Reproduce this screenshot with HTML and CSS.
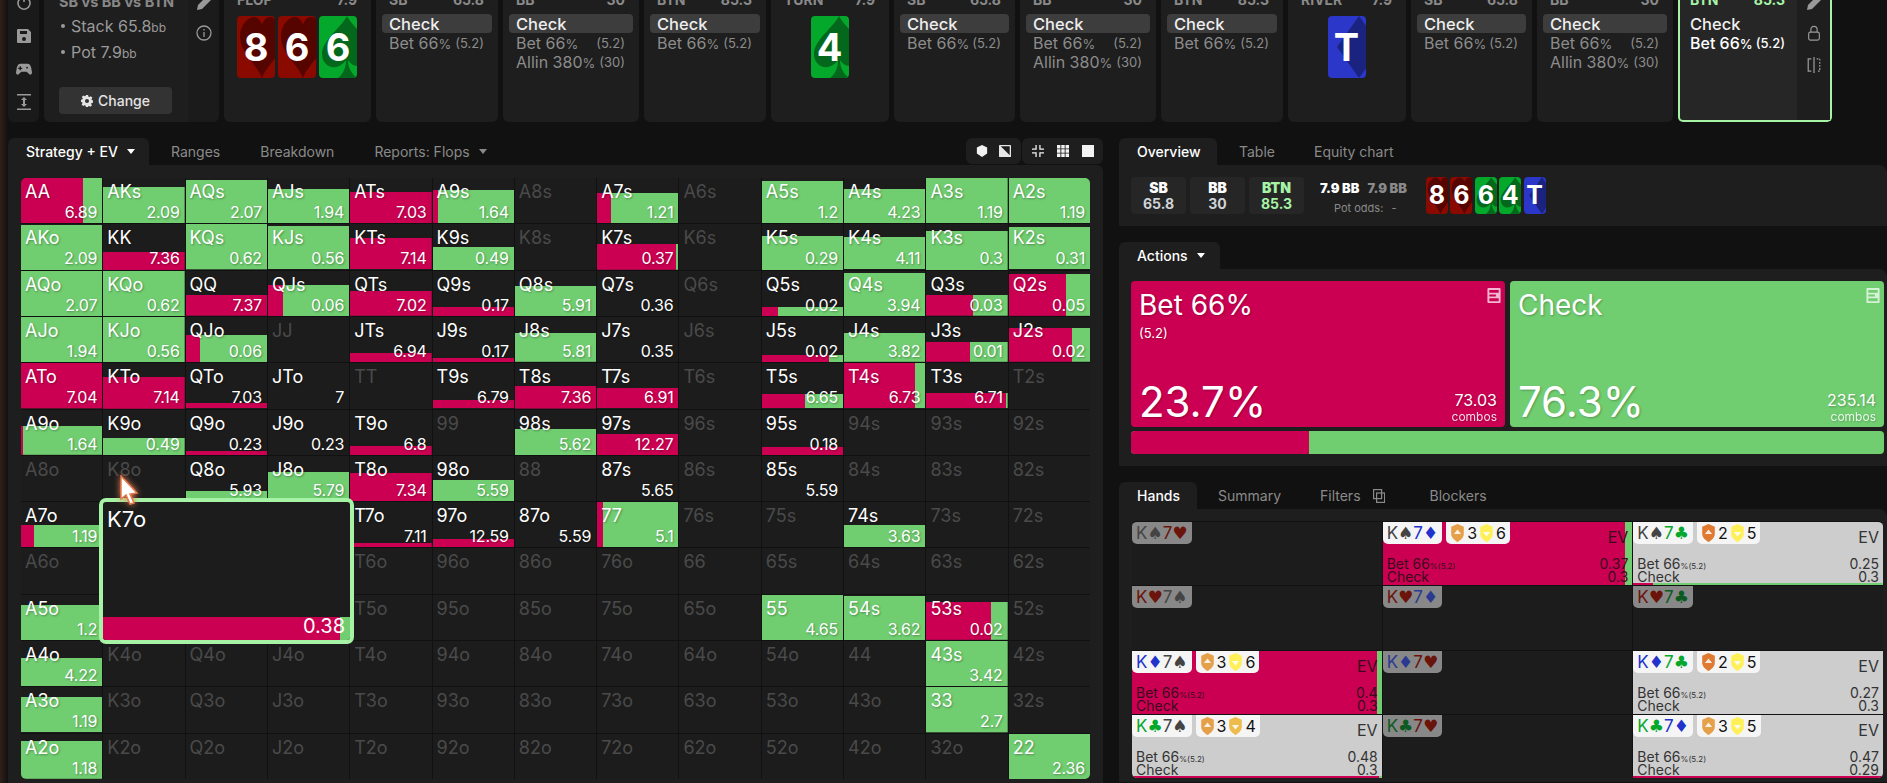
FILE: index.html
```html
<!DOCTYPE html>
<html lang="en">
<head>
<meta charset="utf-8">
<title>Solver</title>
<link rel="stylesheet" href="styles.css">
</head>
<body>
<svg class="sprite" width="0" height="0" aria-hidden="true">
  <symbol id="heart" viewBox="0 0 38 62" preserveAspectRatio="none"><path d="M25 62C20 48 3 38 3 20 3 8 12 1 17 1c4 0 7 4 8 8 1-4 4-8 8-8 5 0 14 7 14 19 0 18-17 28-22 42Z"/></symbol>
  <symbol id="spade" viewBox="0 0 38 62" preserveAspectRatio="none"><path d="M28 0C22 12 3 24 3 38c0 10 9 16 17 12 4-2 6-4 7-6 0 8-3 14-8 18h19c-5-4-9-10-9-18 1 2 5 6 9 6 8 4 15-2 15-12C53 24 34 12 28 0Z"/></symbol>
  <symbol id="diamond" viewBox="0 0 38 62" preserveAspectRatio="none"><path d="M31 0 53 31 31 62 9 31Z"/></symbol>
  <symbol id="shield-up" viewBox="0 0 16 20"><path d="M8 0l7 3v8c0 4-4 7-7 9-3-2-7-5-7-9V3Z"/><path class="arrow" d="M8 6l4 5H4Z"/></symbol>
  <symbol id="shield-down" viewBox="0 0 16 20"><path d="M8 0l7 3v8c0 4-4 7-7 9-3-2-7-5-7-9V3Z"/><path class="arrow" d="M8 14l4-5H4Z"/></symbol>
  <symbol id="pencil" viewBox="0 0 16 16"><path d="M1 15l1-5L11 1l4 4-9 9Z"/></symbol>
  <symbol id="doc" viewBox="0 0 14 16"><path fill-rule="evenodd" d="M1 0h12a1 1 0 0 1 1 1v14a1 1 0 0 1-1 1H1a1 1 0 0 1-1-1V1a1 1 0 0 1 1-1Zm1 2v3h10V2Zm0 5v2h7V7Zm0 4v3h10v-3Z"/></symbol>
</svg>

<div class="app">
  <header class="top">
    <nav class="panel side">
      <svg class="ico line" viewBox="0 0 16 16" stroke="currentColor" stroke-width="1.6"><path d="M5 3a6 6 0 1 0 6 0M8 1v6"/></svg>
      <svg class="ico" viewBox="0 0 16 16"><path fill-rule="evenodd" d="M2 1h10l3 3v10a1 1 0 0 1-1 1H2a1 1 0 0 1-1-1V2a1 1 0 0 1 1-1Zm2 2v3h7V3Zm4 6a2 2 0 1 0 0 4 2 2 0 0 0 0-4Z"/></svg>
      <svg class="ico" viewBox="0 0 18 16"><path fill-rule="evenodd" d="M5 2h8c2 0 3 1 4 4l1 6c0 2-2 3-3 2l-3-3H6l-3 3c-1 1-3 0-3-2l1-6c1-3 2-4 4-4Zm-1 3v1.500H2.500V8H4v1.500h1.500V8H7V6.500H5.500V5Zm8.500 0.500a1 1 0 1 0 0 2 1 1 0 0 0 0-2Z"/></svg>
      <svg class="ico" viewBox="0 0 16 16"><path d="M1 0h14v1.500H1ZM1 14.500h14V16H1ZM8 3l3 3H9v4h2l-3 3-3-3h2V6H5Z"/></svg>
    </nav>

    <section class="panel info">
      <div class="info-main">
        <div class="info-title">SB vs BB vs BTN</div>
        <ul class="info-list">
          <li>Stack 65.8<small>bb</small></li>
          <li>Pot 7.9<small>bb</small></li>
        </ul>
        <button class="change">
          <svg class="gear" viewBox="0 0 16 16"><path fill="currentColor" fill-rule="evenodd" d="M6.500 0h3l.4 2.200 1.300.6L13.100 1.500l2.100 2.100L14 5.500l.5 1.300 1.500.4v3l-2 .4-.5 1.300 1.200 1.800-2.100 2.100-1.900-1.200-1.300.5L9.500 16h-3l-.4-2-1.300-.5-1.900 1.200-2.100-2.100L2 10.800 1.500 9.500 0 9.200v-3l2-.4.500-1.300L1 2.600 3.100.5 5 1.800l1.200-.5ZM8 5.300a2.700 2.700 0 1 0 0 5.400 2.700 2.700 0 0 0 0-5.400Z"/></svg>
          Change
        </button>
      </div>
      <div class="strip">
        <svg class="ico"><use href="#pencil"/></svg>
        <svg class="ico line" viewBox="0 0 16 16" stroke="currentColor" stroke-width="1.300"><circle cx="8" cy="8" r="7"/><path d="M8 7v5M8 4v1.500"/></svg>
      </div>
    </section>

    <section class="panel street w-flop">
      <div class="head"><span>FLOP</span><span>7.9</span></div>
      <div class="cards">
        <div class="card h"><svg><use href="#heart"/></svg><span>8</span></div>
        <div class="card h"><svg><use href="#heart"/></svg><span>6</span></div>
        <div class="card s"><svg><use href="#spade"/></svg><span>6</span></div>
      </div>
    </section>

    <section class="panel seat w-s"><div class="head"><span>SB</span><span>65.8</span></div><div class="act sel">Check</div><div class="act"><span>Bet 66<small>%</small></span><small>(5.2)</small></div></section>
    <section class="panel seat w-b"><div class="head"><span>BB</span><span>30</span></div><div class="act sel">Check</div><div class="act"><span>Bet 66<small>%</small></span><small>(5.2)</small></div><div class="act"><span>Allin 380<small>%</small></span><small>(30)</small></div></section>
    <section class="panel seat w-s"><div class="head"><span>BTN</span><span>85.3</span></div><div class="act sel">Check</div><div class="act"><span>Bet 66<small>%</small></span><small>(5.2)</small></div></section>

    <section class="panel street w-st">
      <div class="head"><span>TURN</span><span>7.9</span></div>
      <div class="cards"><div class="card s"><svg><use href="#spade"/></svg><span>4</span></div></div>
    </section>

    <section class="panel seat w-s2"><div class="head"><span>SB</span><span>65.8</span></div><div class="act sel">Check</div><div class="act"><span>Bet 66<small>%</small></span><small>(5.2)</small></div></section>
    <section class="panel seat w-b"><div class="head"><span>BB</span><span>30</span></div><div class="act sel">Check</div><div class="act"><span>Bet 66<small>%</small></span><small>(5.2)</small></div><div class="act"><span>Allin 380<small>%</small></span><small>(30)</small></div></section>
    <section class="panel seat w-s"><div class="head"><span>BTN</span><span>85.3</span></div><div class="act sel">Check</div><div class="act"><span>Bet 66<small>%</small></span><small>(5.2)</small></div></section>

    <section class="panel street w-st">
      <div class="head"><span>RIVER</span><span>7.9</span></div>
      <div class="cards"><div class="card d"><svg><use href="#diamond"/></svg><span>T</span></div></div>
    </section>

    <section class="panel seat w-s2"><div class="head"><span>SB</span><span>65.8</span></div><div class="act sel">Check</div><div class="act"><span>Bet 66<small>%</small></span><small>(5.2)</small></div></section>
    <section class="panel seat w-b"><div class="head"><span>BB</span><span>30</span></div><div class="act sel">Check</div><div class="act"><span>Bet 66<small>%</small></span><small>(5.2)</small></div><div class="act"><span>Allin 380<small>%</small></span><small>(30)</small></div></section>

    <section class="panel active">
      <div class="active-main">
        <div class="head"><span>BTN</span><span>85.3</span></div>
        <div class="act">Check</div>
        <div class="act strong"><span>Bet 66<small>%</small></span><small>(5.2)</small></div>
      </div>
      <div class="strip">
        <svg class="ico"><use href="#pencil"/></svg>
        <svg class="ico line" viewBox="0 0 16 18" stroke="currentColor" stroke-width="1.300"><rect x="2" y="8" width="12" height="9" rx="2"/><path d="M4.500 8V5a3.500 3.500 0 0 1 7 0v3"/></svg>
        <svg class="ico line split-ico" viewBox="0 0 16 18" stroke="currentColor" stroke-width="1.400"><path d="M5 2H1.500v14H5M8 0v18"/><path stroke-dasharray="2 1.500" d="M11 2h3.500v14H11"/></svg>
      </div>
    </section>
  </header>

  <main class="main">
    <section class="left">
      <div class="tabs">
        <div class="tab on w-strat">Strategy + EV <span class="caret"></span></div>
        <div class="tab">Ranges</div>
        <div class="tab">Breakdown</div>
        <div class="tab">Reports: Flops <span class="caret grey"></span></div>
        <div class="tools">
          <div class="tool-group g1">
            <svg viewBox="0 0 12 14"><path fill="currentColor" d="M6 0l6 3v7l-6 4-6-4V3Z"/></svg>
            <svg viewBox="0 0 14 14"><path fill="currentColor" fill-rule="evenodd" d="M1 0h12a1 1 0 0 1 1 1v12a1 1 0 0 1-1 1H1a1 1 0 0 1-1-1V1a1 1 0 0 1 1-1Zm1 1.500 10.500 10.500V1.500Z" opacity=".95"/></svg>
          </div>
          <div class="tool-group g2">
            <svg viewBox="0 0 14 14"><path fill="currentColor" d="M4 0h1.500v5.500H0V4h4ZM8.500 0H10v4h4v1.500H8.500ZM0 8.500h5.500V14H4v-4H0ZM8.500 8.500H14V10h-4v4H8.500Z"/></svg>
            <svg viewBox="0 0 14 14"><path fill="currentColor" d="M0 0h4v4H0ZM5 0h4v4H5ZM10 0h4v4h-4ZM0 5h4v4H0ZM5 5h4v4H5ZM10 5h4v4h-4ZM0 10h4v4H0ZM5 10h4v4H5ZM10 10h4v4h-4Z"/></svg>
            <svg viewBox="0 0 14 14"><path fill="currentColor" d="M0 0h14v14H0Z"/></svg>
          </div>
        </div>
      </div>
      <div class="left-body">
        <div class="range-wrap">
          <div class="range">
            <div class="c" style="--h:100%;--r:77%"><b>AA</b><em>6.89</em></div>
            <div class="c" style="--h:81%"><b>AKs</b><em>2.09</em></div>
            <div class="c" style="--h:96%"><b>AQs</b><em>2.07</em></div>
            <div class="c" style="--h:76%"><b>AJs</b><em>1.94</em></div>
            <div class="c" style="--h:69%;--r:100%"><b>ATs</b><em>7.03</em></div>
            <div class="c" style="--h:74%;--r:6%"><b>A9s</b><em>1.64</em></div>
            <div class="c off"><b>A8s</b></div>
            <div class="c" style="--h:67%;--r:17%"><b>A7s</b><em>1.21</em></div>
            <div class="c off"><b>A6s</b></div>
            <div class="c" style="--h:94%"><b>A5s</b><em>1.2</em></div>
            <div class="c" style="--h:76%"><b>A4s</b><em>4.23</em></div>
            <div class="c" style="--h:100%"><b>A3s</b><em>1.19</em></div>
            <div class="c" style="--h:100%"><b>A2s</b><em>1.19</em></div>

            <div class="c" style="--h:98%"><b>AKo</b><em>2.09</em></div>
            <div class="c" style="--h:39%;--r:100%"><b>KK</b><em>7.36</em></div>
            <div class="c" style="--h:100%"><b>KQs</b><em>0.62</em></div>
            <div class="c" style="--h:94%"><b>KJs</b><em>0.56</em></div>
            <div class="c" style="--h:68%;--r:100%"><b>KTs</b><em>7.14</em></div>
            <div class="c" style="--h:50%"><b>K9s</b><em>0.49</em></div>
            <div class="c off"><b>K8s</b></div>
            <div class="c" style="--h:56%;--r:97%"><b>K7s</b><em>0.37</em></div>
            <div class="c off"><b>K6s</b></div>
            <div class="c" style="--h:74%"><b>K5s</b><em>0.29</em></div>
            <div class="c" style="--h:70%"><b>K4s</b><em>4.11</em></div>
            <div class="c" style="--h:85%"><b>K3s</b><em>0.3</em></div>
            <div class="c" style="--h:92%"><b>K2s</b><em>0.31</em></div>

            <div class="c" style="--h:100%"><b>AQo</b><em>2.07</em></div>
            <div class="c" style="--h:100%"><b>KQo</b><em>0.62</em></div>
            <div class="c" style="--h:46%;--r:100%"><b>QQ</b><em>7.37</em></div>
            <div class="c" style="--h:69%;--r:19%"><b>QJs</b><em>0.06</em></div>
            <div class="c" style="--h:55%;--r:100%"><b>QTs</b><em>7.02</em></div>
            <div class="c" style="--h:20%;--r:100%"><b>Q9s</b><em>0.17</em></div>
            <div class="c" style="--h:67%"><b>Q8s</b><em>5.91</em></div>
            <div class="c"><b>Q7s</b><em>0.36</em></div>
            <div class="c off"><b>Q6s</b></div>
            <div class="c" style="--h:20%;--r:20%"><b>Q5s</b><em>0.02</em></div>
            <div class="c" style="--h:96%"><b>Q4s</b><em>3.94</em></div>
            <div class="c" style="--h:46%;--r:58%"><b>Q3s</b><em>0.03</em></div>
            <div class="c" style="--h:93%;--r:70%"><b>Q2s</b><em>0.05</em></div>

            <div class="c" style="--h:100%"><b>AJo</b><em>1.94</em></div>
            <div class="c" style="--h:100%"><b>KJo</b><em>0.56</em></div>
            <div class="c" style="--h:60%;--r:17%"><b>QJo</b><em>0.06</em></div>
            <div class="c off"><b>JJ</b></div>
            <div class="c" style="--h:20%;--r:100%"><b>JTs</b><em>6.94</em></div>
            <div class="c" style="--h:9%;--r:100%"><b>J9s</b><em>0.17</em></div>
            <div class="c" style="--h:64%"><b>J8s</b><em>5.81</em></div>
            <div class="c"><b>J7s</b><em>0.35</em></div>
            <div class="c off"><b>J6s</b></div>
            <div class="c" style="--h:16%;--r:83%"><b>J5s</b><em>0.02</em></div>
            <div class="c" style="--h:64%"><b>J4s</b><em>3.82</em></div>
            <div class="c" style="--h:44%;--r:54%"><b>J3s</b><em>0.01</em></div>
            <div class="c" style="--h:75%;--r:78%"><b>J2s</b><em>0.02</em></div>

            <div class="c" style="--h:100%;--r:100%"><b>ATo</b><em>7.04</em></div>
            <div class="c" style="--h:69%;--r:100%"><b>KTo</b><em>7.14</em></div>
            <div class="c" style="--h:11%;--r:100%"><b>QTo</b><em>7.03</em></div>
            <div class="c"><b>JTo</b><em>7</em></div>
            <div class="c off"><b>TT</b></div>
            <div class="c" style="--h:18%;--r:100%"><b>T9s</b><em>6.79</em></div>
            <div class="c" style="--h:49%;--r:100%"><b>T8s</b><em>7.36</em></div>
            <div class="c" style="--h:44%;--r:100%"><b>T7s</b><em>6.91</em></div>
            <div class="c off"><b>T6s</b></div>
            <div class="c" style="--h:31%;--r:53%"><b>T5s</b><em>6.65</em></div>
            <div class="c" style="--h:98%;--r:88%"><b>T4s</b><em>6.73</em></div>
            <div class="c" style="--h:33%;--r:98%"><b>T3s</b><em>6.71</em></div>
            <div class="c off"><b>T2s</b></div>

            <div class="c" style="--h:64%;--r:3%"><b>A9o</b><em>1.64</em></div>
            <div class="c" style="--h:38%"><b>K9o</b><em>0.49</em></div>
            <div class="c" style="--h:9%;--r:100%"><b>Q9o</b><em>0.23</em></div>
            <div class="c"><b>J9o</b><em>0.23</em></div>
            <div class="c" style="--h:20%;--r:100%"><b>T9o</b><em>6.8</em></div>
            <div class="c off"><b>99</b></div>
            <div class="c" style="--h:58%"><b>98s</b><em>5.62</em></div>
            <div class="c" style="--h:47%;--r:100%"><b>97s</b><em>12.27</em></div>
            <div class="c off"><b>96s</b></div>
            <div class="c" style="--h:18%;--r:100%"><b>95s</b><em>0.18</em></div>
            <div class="c off"><b>94s</b></div>
            <div class="c off"><b>93s</b></div>
            <div class="c off"><b>92s</b></div>

            <div class="c off"><b>A8o</b></div>
            <div class="c off"><b>K8o</b></div>
            <div class="c" style="--h:22%"><b>Q8o</b><em>5.93</em></div>
            <div class="c" style="--h:65%"><b>J8o</b><em>5.79</em></div>
            <div class="c" style="--h:63%;--r:100%"><b>T8o</b><em>7.34</em></div>
            <div class="c" style="--h:48%"><b>98o</b><em>5.59</em></div>
            <div class="c off"><b>88</b></div>
            <div class="c"><b>87s</b><em>5.65</em></div>
            <div class="c off"><b>86s</b></div>
            <div class="c"><b>85s</b><em>5.59</em></div>
            <div class="c off"><b>84s</b></div>
            <div class="c off"><b>83s</b></div>
            <div class="c off"><b>82s</b></div>

            <div class="c" style="--h:51%;--r:16%"><b>A7o</b><em>1.19</em></div>
            <div class="c off"><b></b></div>
            <div class="c off"><b></b></div>
            <div class="c off"><b></b></div>
            <div class="c" style="--h:11%;--r:100%"><b>T7o</b><em>7.11</em></div>
            <div class="c" style="--h:18%;--r:100%"><b>97o</b><em>12.59</em></div>
            <div class="c"><b>87o</b><em>5.59</em></div>
            <div class="c" style="--h:100%;--r:7%"><b>77</b><em>5.1</em></div>
            <div class="c off"><b>76s</b></div>
            <div class="c off"><b>75s</b></div>
            <div class="c" style="--h:50%"><b>74s</b><em>3.63</em></div>
            <div class="c off"><b>73s</b></div>
            <div class="c off"><b>72s</b></div>

            <div class="c off"><b>A6o</b></div>
            <div class="c off"><b></b></div>
            <div class="c off"><b></b></div>
            <div class="c off"><b></b></div>
            <div class="c off"><b>T6o</b></div>
            <div class="c off"><b>96o</b></div>
            <div class="c off"><b>86o</b></div>
            <div class="c off"><b>76o</b></div>
            <div class="c off"><b>66</b></div>
            <div class="c off"><b>65s</b></div>
            <div class="c off"><b>64s</b></div>
            <div class="c off"><b>63s</b></div>
            <div class="c off"><b>62s</b></div>

            <div class="c" style="--h:78%"><b>A5o</b><em>1.2</em></div>
            <div class="c off"><b></b></div>
            <div class="c off"><b></b></div>
            <div class="c off"><b></b></div>
            <div class="c off"><b>T5o</b></div>
            <div class="c off"><b>95o</b></div>
            <div class="c off"><b>85o</b></div>
            <div class="c off"><b>75o</b></div>
            <div class="c off"><b>65o</b></div>
            <div class="c" style="--h:100%"><b>55</b><em>4.65</em></div>
            <div class="c" style="--h:98%"><b>54s</b><em>3.62</em></div>
            <div class="c" style="--h:84%;--r:80%"><b>53s</b><em>0.02</em></div>
            <div class="c off"><b>52s</b></div>

            <div class="c" style="--h:63%"><b>A4o</b><em>4.22</em></div>
            <div class="c off"><b>K4o</b></div>
            <div class="c off"><b>Q4o</b></div>
            <div class="c off"><b>J4o</b></div>
            <div class="c off"><b>T4o</b></div>
            <div class="c off"><b>94o</b></div>
            <div class="c off"><b>84o</b></div>
            <div class="c off"><b>74o</b></div>
            <div class="c off"><b>64o</b></div>
            <div class="c off"><b>54o</b></div>
            <div class="c off"><b>44</b></div>
            <div class="c" style="--h:100%"><b>43s</b><em>3.42</em></div>
            <div class="c off"><b>42s</b></div>

            <div class="c" style="--h:77%"><b>A3o</b><em>1.19</em></div>
            <div class="c off"><b>K3o</b></div>
            <div class="c off"><b>Q3o</b></div>
            <div class="c off"><b>J3o</b></div>
            <div class="c off"><b>T3o</b></div>
            <div class="c off"><b>93o</b></div>
            <div class="c off"><b>83o</b></div>
            <div class="c off"><b>73o</b></div>
            <div class="c off"><b>63o</b></div>
            <div class="c off"><b>53o</b></div>
            <div class="c off"><b>43o</b></div>
            <div class="c" style="--h:100%"><b>33</b><em>2.7</em></div>
            <div class="c off"><b>32s</b></div>

            <div class="c" style="--h:84%"><b>A2o</b><em>1.18</em></div>
            <div class="c off"><b>K2o</b></div>
            <div class="c off"><b>Q2o</b></div>
            <div class="c off"><b>J2o</b></div>
            <div class="c off"><b>T2o</b></div>
            <div class="c off"><b>92o</b></div>
            <div class="c off"><b>82o</b></div>
            <div class="c off"><b>72o</b></div>
            <div class="c off"><b>62o</b></div>
            <div class="c off"><b>52o</b></div>
            <div class="c off"><b>42o</b></div>
            <div class="c off"><b>32o</b></div>
            <div class="c" style="--h:100%"><b>22</b><em>2.36</em></div>
          </div>
          <div class="pop">
            <div class="pop-name">K7o</div>
            <div class="pop-bar">0.38</div>
          </div>
          <svg class="cursor" viewBox="0 0 20 30"><path fill="#fff" stroke="#e8794a" stroke-width="1.500" d="M2 1l16 17-7 1 4 9-4 1-4-9-5 4Z"/></svg>
        </div>
      </div>
    </section>

    <section class="right">
      <div class="tabs">
        <div class="tab on w-over">Overview</div>
        <div class="tab">Table</div>
        <div class="tab">Equity chart</div>
      </div>
      <div class="block overview">
        <div class="stat"><b>SB</b><span>65.8</span></div>
        <div class="stat"><b>BB</b><span>30</span></div>
        <div class="stat hot"><b>BTN</b><span>85.3</span></div>
        <div class="pot">
          <div class="pot-top"><b>7.9 BB</b><b class="dim">7.9 BB</b></div>
          <div class="pot-odds">Pot odds: <span>-</span></div>
        </div>
        <div class="mini">
          <div class="card sm h"><svg><use href="#heart"/></svg><span>8</span></div>
          <div class="card sm h"><svg><use href="#heart"/></svg><span>6</span></div>
          <div class="card sm s"><svg><use href="#spade"/></svg><span>6</span></div>
          <div class="card sm s"><svg><use href="#spade"/></svg><span>4</span></div>
          <div class="card sm d"><svg><use href="#diamond"/></svg><span>T</span></div>
        </div>
      </div>

      <div class="tabs gap-top">
        <div class="tab on w-act">Actions <span class="caret"></span></div>
      </div>
      <div class="block actions">
        <div class="act-cards">
          <div class="acard red">
            <svg class="doc"><use href="#doc"/></svg>
            <div class="acard-title">Bet 66%</div>
            <div class="acard-sub">(5.2)</div>
            <div class="acard-foot">
              <div class="acard-pct">23.7%</div>
              <div class="acard-combo"><span>73.03</span><small>combos</small></div>
            </div>
          </div>
          <div class="acard green">
            <svg class="doc"><use href="#doc"/></svg>
            <div class="acard-title">Check</div>
            <div class="acard-foot">
              <div class="acard-pct">76.3%</div>
              <div class="acard-combo"><span>235.14</span><small>combos</small></div>
            </div>
          </div>
        </div>
        <div class="split"><div class="split-red"></div></div>
      </div>

      <div class="tabs gap-top">
        <div class="tab on w-hands">Hands</div>
        <div class="tab">Summary</div>
        <div class="tab">Filters <svg class="copy" viewBox="0 0 12 14" fill="none" stroke="currentColor" stroke-width="1.200"><rect x=".6" y=".6" width="8" height="9"/><rect x="3.600" y="4" width="8" height="9.400"/></svg></div>
        <div class="tab">Blockers</div>
      </div>
      <div class="block hands">
        <div class="hand-grid">
          <div class="hand"><div class="hrow"><div class="chip dead">K<i class="sp">♠</i><span class="t-h">7</span><i class="he">♥</i></div></div></div>

          <div class="hand filled" style="--h:100%;--r:97%">
            <div class="hrow"><div class="chip"><span class="t-s">K</span><i class="sp">♠</i><span class="t-d">7</span><i class="di">♦</i></div>
              <div class="chip blk"><svg class="sh o1"><use href="#shield-up"/></svg>3<svg class="sh y1"><use href="#shield-down"/></svg>6</div>
              <span class="evl">EV</span></div>
            <div class="ln"><span>Bet 66<small>%(5.2)</small></span><span>0.37</span></div>
            <div class="ln"><span>Check</span><span>0.3</span></div>
          </div>

          <div class="hand grey" style="--h:2px;--r:8%">
            <div class="hrow"><div class="chip"><span class="t-s">K</span><i class="sp">♠</i><span class="t-c">7</span><i class="cl">♣</i></div>
              <div class="chip blk"><svg class="sh o2"><use href="#shield-up"/></svg>2<svg class="sh y1"><use href="#shield-down"/></svg>5</div>
              <span class="evl">EV</span></div>
            <div class="ln"><span>Bet 66<small>%(5.2)</small></span><span>0.25</span></div>
            <div class="ln"><span>Check</span><span>0.3</span></div>
          </div>

          <div class="hand"><div class="hrow"><div class="chip dead"><span class="t-h">K</span><i class="he">♥</i>7<i class="sp">♠</i></div></div></div>
          <div class="hand"><div class="hrow"><div class="chip dead"><span class="t-h">K</span><i class="he">♥</i><span class="t-d">7</span><i class="di">♦</i></div></div></div>
          <div class="hand"><div class="hrow"><div class="chip dead"><span class="t-h">K</span><i class="he">♥</i><span class="t-c">7</span><i class="cl">♣</i></div></div></div>

          <div class="hand filled" style="--h:100%;--r:98%">
            <div class="hrow"><div class="chip"><span class="t-d">K</span><i class="di">♦</i><span class="t-s">7</span><i class="sp">♠</i></div>
              <div class="chip blk"><svg class="sh o1"><use href="#shield-up"/></svg>3<svg class="sh y1"><use href="#shield-down"/></svg>6</div>
              <span class="evl">EV</span></div>
            <div class="ln"><span>Bet 66<small>%(5.2)</small></span><span>0.4</span></div>
            <div class="ln"><span>Check</span><span>0.3</span></div>
          </div>

          <div class="hand"><div class="hrow"><div class="chip dead"><span class="t-d">K</span><i class="di">♦</i><span class="t-h">7</span><i class="he">♥</i></div></div></div>

          <div class="hand grey">
            <div class="hrow"><div class="chip"><span class="t-d">K</span><i class="di">♦</i><span class="t-c">7</span><i class="cl">♣</i></div>
              <div class="chip blk"><svg class="sh o2"><use href="#shield-up"/></svg>2<svg class="sh y1"><use href="#shield-down"/></svg>5</div>
              <span class="evl">EV</span></div>
            <div class="ln"><span>Bet 66<small>%(5.2)</small></span><span>0.27</span></div>
            <div class="ln"><span>Check</span><span>0.3</span></div>
          </div>

          <div class="hand grey" style="--h:2px;--r:99%">
            <div class="hrow"><div class="chip"><span class="t-c">K</span><i class="cl">♣</i><span class="t-s">7</span><i class="sp">♠</i></div>
              <div class="chip blk"><svg class="sh o1"><use href="#shield-up"/></svg>3<svg class="sh y2"><use href="#shield-down"/></svg>4</div>
              <span class="evl">EV</span></div>
            <div class="ln"><span>Bet 66<small>%(5.2)</small></span><span>0.48</span></div>
            <div class="ln"><span>Check</span><span>0.3</span></div>
          </div>

          <div class="hand"><div class="hrow"><div class="chip dead"><span class="t-c">K</span><i class="cl">♣</i><span class="t-h">7</span><i class="he">♥</i></div></div></div>

          <div class="hand grey" style="--h:2px;--r:100%">
            <div class="hrow"><div class="chip"><span class="t-c">K</span><i class="cl">♣</i><span class="t-d">7</span><i class="di">♦</i></div>
              <div class="chip blk"><svg class="sh o1"><use href="#shield-up"/></svg>3<svg class="sh y1"><use href="#shield-down"/></svg>5</div>
              <span class="evl">EV</span></div>
            <div class="ln"><span>Bet 66<small>%(5.2)</small></span><span>0.47</span></div>
            <div class="ln"><span>Check</span><span>0.29</span></div>
          </div>
        </div>
      </div>
    </section>
  </main>
</div>
</body>
</html>
```
FILE: styles.css
```css
* { box-sizing: border-box; }
:root {
  --red: #cb0052;
  --green: #70cd70;
  --panel: #1e1e1e;
  --cell: #1c1c1c;
  --line: #111;
  --mint: #a6f3a6;
}
html, body { margin: 0; height: 100%; overflow: hidden; }
body {
  background: linear-gradient(to right, #33201a, #111 8px);
  color: #fff;
  font-family: Inter, "Liberation Sans", sans-serif;
  font-size: 14px;
}
.sprite { position: absolute; }
.app { padding: 0 0 0 8px; margin-top: -20px; }

/* top row */
.top { display: flex; gap: 5px; height: 142px; }
.panel { background: var(--panel); border-radius: 0 0 6px 6px; flex: none; }
.ico { width: 16px; height: 16px; color: #999; fill: currentColor; display: block; }
.ico.line { fill: none; }
.side { width: 31px; display: flex; flex-direction: column; align-items: center; gap: 17px; padding-top: 15px; background: #1a1a1a; }
.info { width: 175px; display: flex; overflow: hidden; }
.info-main { width: 144px; padding: 14px 0 0 15px; display: flex; flex-direction: column; }
.info-title { font-weight: 700; color: #888; font-size: 14.500px; line-height: 16px; white-space: nowrap; }
.info-list { list-style: none; margin: 4px 0 0; padding: 0 0 0 12px; color: #9a9a9a; font-size: 16px; line-height: 24px; }
.info-list li { position: relative; }
.info-list li::before { content: ""; position: absolute; left: -10px; top: 10px; width: 4px; height: 4px; border-radius: 50%; background: #9a9a9a; }
.info-list small { font-size: 12px; }
.change { margin-top: 21px; width: 113px; height: 27px; border: 0; border-radius: 4px; background: #333; color: #e4e4e4; font: 500 14px Inter, sans-serif; display: flex; align-items: center; justify-content: center; gap: 5px; }
.gear { width: 12px; height: 12px; }
.strip { flex: 1; background: #1b1b1b; display: flex; flex-direction: column; align-items: center; gap: 14px; padding-top: 15px; }

.head { display: flex; justify-content: space-between; font-weight: 700; color: #8a8a8a; font-size: 14px; line-height: 16px; height: 16px; }
.street { padding: 12px 14px 0 13px; }
.w-flop { width: 147px; }
.w-st { width: 118px; }
.w-s { width: 122px; }
.w-s2 { width: 121px; }
.w-b { width: 136px; }
.cards { display: flex; justify-content: center; gap: 3px; margin-top: 8px; }
.card { position: relative; width: 38px; height: 62px; border-radius: 4px; overflow: hidden; flex: none; display: flex; align-items: center; justify-content: center; }
.card svg { position: absolute; inset: 0; width: 100%; height: 100%; }
.card span { position: relative; font-size: 38px; font-weight: 700; line-height: 1; }
.card.h { background: #8b0a00; fill: #560400; }
.card.s { background: #04a82a; fill: #04681c; }
.card.d { background: #2a37c8; fill: #1a2480; }
.card.sm { width: 22px; height: 37px; }
.card.sm span { font-size: 25px; }

.seat { padding: 12px 6px 0; }
.seat .head { padding: 0 8px 0 7px; }
.act { display: flex; justify-content: space-between; align-items: center; height: 19.500px; padding: 0 8px 0 7px; color: #8c8c8c; font-size: 16px; white-space: nowrap; }
.act small { font-size: 13px; }
.act.sel { height: 19px; margin: 6px 0 0; background: #3d3d3d; border-radius: 4px; color: #eee; font-weight: 500; font-size: 16.500px; }
.act.sel + .act { margin-top: 0; }
.active { width: 154px; display: flex; border: 2px solid var(--mint); border-top: 0; background: #262626; border-radius: 0 0 5px 5px; }
.active-main { width: 117px; padding: 12px 4px 0 3px; }
.active .head { color: var(--mint); padding: 0 8px 0 7px; }
.active .act { color: #f0f0f0; font-weight: 500; margin-top: 0; }
.active .act:nth-child(2) { margin-top: 6px; height: 19px; font-size: 16.500px; }
.active .act.strong { font-weight: 500; color: #fff; }
.active .strip { background: #1e1e1e; gap: 14px; }
.split-ico { margin-top: 2px; }

/* main */
.main { display: flex; gap: 16px; margin-top: 16px; }
.left { width: 1095px; flex: none; }
.right { flex: 1; min-width: 0; }
.tabs { display: flex; height: 27px; align-items: center; color: #8a8a8a; font-size: 14px; }
.tab { height: 100%; display: flex; align-items: center; white-space: nowrap; }
.tab.on { background: var(--panel); border-radius: 6px 6px 0 0; color: #fff; font-weight: 500; justify-content: flex-start; padding-left: 18px; }
.left .tab:nth-child(2) { margin-left: 22px; }
.left .tab:nth-child(3) { margin-left: 40px; }
.left .tab:nth-child(4) { margin-left: 40px; }
.w-strat { width: 141px; }
.w-over { width: 98px; }
.w-act { width: 101px; }
.w-hands { width: 78px; }
.right .tab.w-over + .tab { margin-left: 22px; }
.right .tab.w-over + .tab + .tab { margin-left: 39px; }
.right .tab.w-hands + .tab { margin-left: 21px; }
.right .tab.w-hands + .tab + .tab { margin-left: 39px; }
.right .tab.w-hands + .tab + .tab + .tab { margin-left: 45px; }
.gap-top { margin-top: 16px; }
.caret { display: inline-block; margin-left: 9px; border: 4.500px solid transparent; border-top: 5px solid #fff; border-bottom: 0; }
.caret.grey { border-top-color: #8a8a8a; }
.tools { margin-left: auto; display: flex; gap: 1px; height: 26px; align-self: flex-start; color: #f2f2f2; }
.tool-group { background: var(--panel); border-radius: 6px; display: flex; align-items: center; justify-content: space-around; height: 26px; }
.tool-group svg { width: 12px; height: 12px; }
.g1 { width: 55px; padding: 0 4px; }
.g2 { width: 81px; padding: 0 3px; }

.left-body { background: var(--panel); padding: 13px 0 0 13px; height: 640px; border-radius: 0 6px 0 0; }
.range-wrap { position: relative; width: 1069px; }
.range { display: grid; grid-template-columns: repeat(13, 1fr); grid-template-rows: repeat(13, 1fr); height: 601px; gap: 1px; background: var(--line); border-radius: 5px; overflow: hidden; }
.c {
  --h: 0%; --r: 0%;
  background: linear-gradient(to right, var(--red) var(--r), var(--green) var(--r)) bottom / 100% var(--h) no-repeat var(--cell);
  display: flex; flex-direction: column; justify-content: space-between;
  padding: 3px 5px 4px 4px; min-width: 0; overflow: hidden;
  text-shadow: 1px 1px 2px rgba(0,0,0,.3);
}
.c b { font-weight: 400; font-size: 18px; line-height: 22px; }
.c em { font-style: normal; font-size: 16px; line-height: 18px; text-align: right; letter-spacing: -.2px; }
.c.off b { color: #4a4a4a; text-shadow: none; }
.pop { position: absolute; left: 78px; top: 320px; width: 255px; height: 146px; border: 4px solid var(--mint); border-radius: 7px; background: var(--cell); display: flex; flex-direction: column; justify-content: space-between; padding-top: 2px; overflow: hidden; }
.pop-name { font-size: 22px; line-height: 30px; padding-left: 4px; }
.pop-bar { height: 23px; background: linear-gradient(to right, var(--red) 96%, var(--green) 96%); text-align: right; font-size: 20px; line-height: 18px; padding-right: 5px; }
.cursor { position: absolute; left: 98px; top: 297px; width: 20px; height: 30px; filter: drop-shadow(0 0 3px #f08050); }

/* right */
.block { background: var(--panel); border-radius: 0 8px 0 0; }
.overview { height: 61px; display: flex; align-items: flex-start; padding: 12px 0 0 12px; gap: 4px; }
.stat { width: 55px; height: 37px; background: #262626; border-radius: 4px; display: flex; flex-direction: column; align-items: center; justify-content: center; font-weight: 700; font-size: 14px; line-height: 16px; color: #cfd4d8; }
.stat b { color: #fff; }
.stat.hot, .stat.hot b { color: var(--mint); }
.pot { width: 102px; margin-left: 12px; font-weight: 700; }
.pot-top { display: flex; gap: 8px; font-size: 13px; line-height: 16px; margin-top: 3px; white-space: nowrap; }
.dim { color: #8a8a8a; }
.pot-odds { margin-top: 5px; font-size: 11px; font-weight: 400; color: #8a8a8a; padding-left: 14px; white-space: nowrap; }
.pot-odds span { margin-left: 5px; }
.mini { display: flex; gap: 2.400px; }

.actions { height: 197px; padding: 12px 3px 0 12px; }
.act-cards { display: flex; gap: 5px; height: 146px; }
.acard { flex: 1; position: relative; border-radius: 4px; padding: 8px 8px 3px 8px; display: flex; flex-direction: column; text-shadow: 1px 1px 2px rgba(0,0,0,.25); }
.acard.red { background: var(--red); }
.acard.green { background: var(--green); }
.doc { position: absolute; right: 4px; top: 7px; width: 14px; height: 15px; fill: rgba(255,255,255,.72); }
.acard-title { font-size: 28px; line-height: 32px; }
.acard-sub { font-size: 13px; line-height: 16px; margin-top: 4px; }
.acard-foot { margin-top: auto; display: flex; justify-content: space-between; align-items: flex-end; }
.acard-pct { font-size: 42px; line-height: 44px; }
.acard-combo { display: flex; flex-direction: column; align-items: flex-end; }
.acard-combo span { font-size: 16px; line-height: 20px; }
.acard-combo small { font-size: 12px; line-height: 14px; opacity: .85; }
.split { height: 23px; margin-top: 4px; background: var(--green); border-radius: 4px; overflow: hidden; }
.split-red { width: 178px; height: 100%; background: var(--red); }

.copy { width: 12px; height: 14px; margin-left: 12px; }
.hands { height: 273px; padding: 12px 4px 0 13px; }
.hand-grid { display: grid; grid-template-columns: repeat(3, 1fr); grid-auto-rows: 63.250px; gap: 1px; background: var(--line); border-radius: 5px; overflow: hidden; border-top: 1px solid var(--line); }
.hand { --h: 0%; --r: 0%; background: var(--cell); display: flex; flex-direction: column; min-width: 0; color: #333; }
.hand.grey { background: linear-gradient(to right, var(--red) var(--r), var(--green) var(--r)) bottom / 100% var(--h) no-repeat #cdcdcd; }
.hand.filled { background: linear-gradient(to right, var(--red) var(--r), var(--green) var(--r)); color: #3a0a1c; }
.hrow { display: flex; gap: 4px; height: 28px; margin-bottom: 7px; }
.chip { height: 22px; display: flex; align-items: center; padding: 0 4px; background: #f5f5f5; border-radius: 0 0 5px 5px; font-size: 17px; color: #111; white-space: nowrap; }
.chip i { font: normal 17px "DejaVu Sans", sans-serif; }
.chip.dead { background: #888; color: #444; }
.chip.dead .t-h, .chip.dead .he { color: #6b140c; }
.chip.dead .t-d, .chip.dead .di { color: #2b3a90; }
.chip.dead .t-c, .chip.dead .cl { color: #0c5a20; }
.chip.blk { gap: 2px; padding: 0 4px; font-size: 16px; }
.t-s, .sp { color: #444; }
.t-h, .he { color: #8a1000; }
.t-d, .di { color: #2233cc; }
.t-c, .cl { color: #06a82c; }
.sh { width: 15px; height: 18px; }
.arrow { fill: rgba(255,255,255,.85); }
.o1 { fill: #e6a04a; }
.o2 { fill: #df7a30; }
.y1 { fill: #fff05a; }
.y2 { fill: #eebc4e; }
.evl { margin-left: auto; align-self: flex-start; margin-top: 6px; font-size: 16px; line-height: 18px; padding-right: 4px; }
.ln { display: flex; justify-content: space-between; height: 13px; padding: 0 4px; font-size: 14px; line-height: 13px; white-space: nowrap; }
.ln small { font-size: 8px; line-height: 0; }
```
